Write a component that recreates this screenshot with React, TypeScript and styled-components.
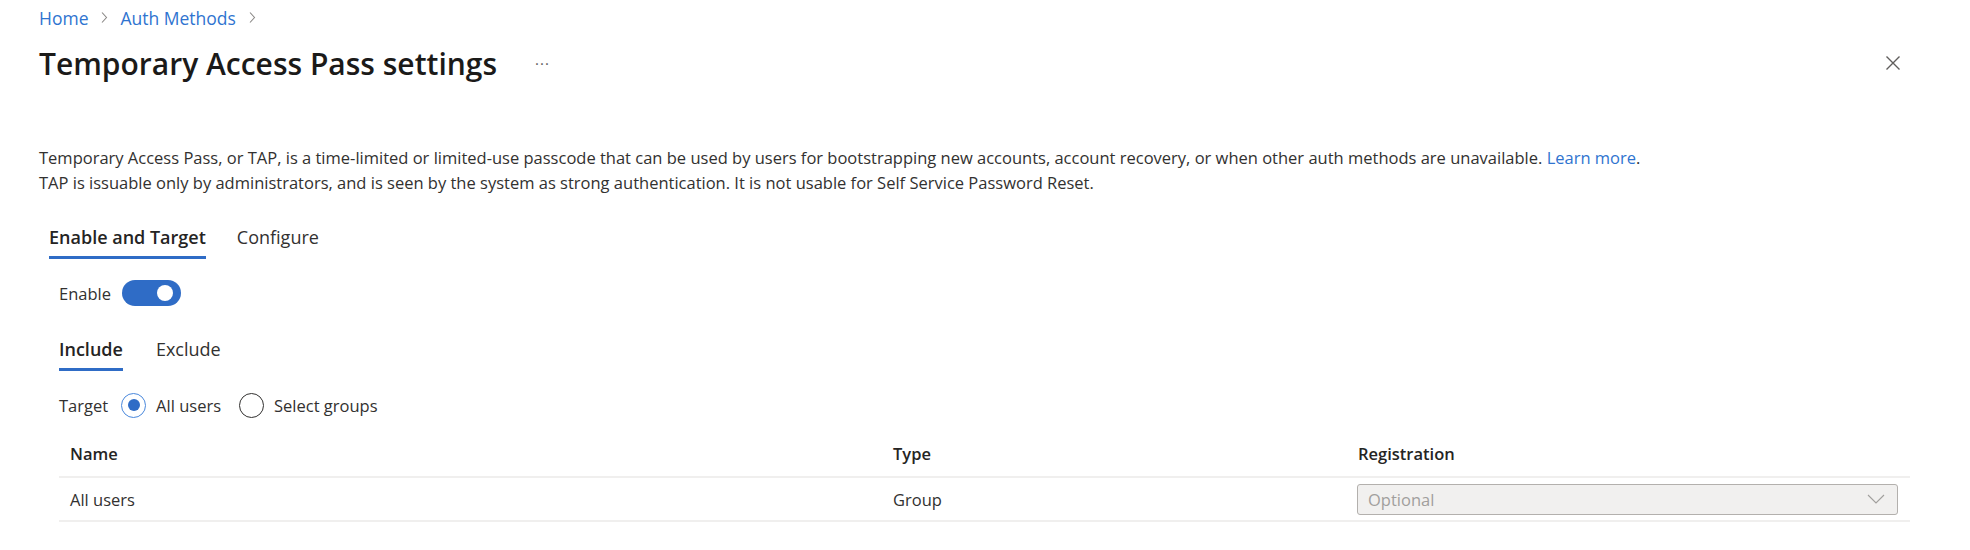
import React from "react";
import styled, { createGlobalStyle } from "styled-components";

const GlobalStyle = createGlobalStyle`
  body {
    margin: 0;
    background: #ffffff;
    font-family: "Open Sans", "Noto Sans", Arial, sans-serif;
    color: #323130;
  }
`;

const Page = styled.div`
  padding: 0 39px;
`;

const Breadcrumb = styled.nav`
  display: flex;
  align-items: center;
  height: 35px;
  font-size: 17.5px;
`;

const Crumb = styled.a`
  color: #2f74d0;
  text-decoration: none;
`;

const CrumbSep = styled.span`
  display: inline-flex;
  margin: 0 12px;
`;

const Header = styled.div`
  display: flex;
  align-items: center;
  height: 56px;
`;

const Title = styled.h1`
  margin: 0;
  font-size: 30px;
  font-weight: 600;
  color: #1b1a19;
`;

const More = styled.span`
  margin-left: 38px;
  font-size: 15px;
  color: #605e5c;
  letter-spacing: 1px;
`;

const CloseButton = styled.button`
  margin-left: auto;
  margin-right: 26px;
  border: none;
  background: none;
  padding: 4px;
  display: flex;
  cursor: pointer;
`;

const Description = styled.div`
  margin-top: 54px;
  font-size: 16.5px;
  line-height: 25px;
  color: #323130;
`;

const Link = styled.a`
  color: #2f74d0;
  text-decoration: none;
`;

const TabList = styled.div<{ $gap: number }>`
  display: flex;
  gap: ${(p) => p.$gap}px;
`;

const Tab = styled.div<{ $active?: boolean }>`
  font-size: 18px;
  line-height: 24px;
  font-weight: ${(p) => (p.$active ? 600 : 400)};
  color: ${(p) => (p.$active ? "#252423" : "#323130")};
  padding-bottom: 7px;
  border-bottom: 3px solid ${(p) => (p.$active ? "#2f6cc6" : "transparent")};
`;

const MainTabs = styled(TabList)`
  margin-top: 30px;
  padding-left: 10px;
`;

const Panel = styled.div`
  padding-left: 20px;
`;

const EnableRow = styled.div`
  display: flex;
  align-items: center;
  gap: 11px;
  margin-top: 21px;
  font-size: 16.5px;
`;

const Toggle = styled.span`
  position: relative;
  width: 59px;
  height: 26px;
  border-radius: 13px;
  background: #2f6cc6;
  display: inline-block;
`;

const Knob = styled.span`
  position: absolute;
  top: 5px;
  right: 8px;
  width: 16px;
  height: 16px;
  border-radius: 50%;
  background: #ffffff;
`;

const SubTabs = styled(TabList)`
  margin-top: 31px;
`;

const TargetRow = styled.div`
  display: flex;
  align-items: center;
  margin-top: 20px;
  font-size: 16.5px;
  height: 28px;
`;

const RadioOption = styled.label<{ $first?: boolean }>`
  display: flex;
  align-items: center;
  gap: 10px;
  margin-left: ${(p) => (p.$first ? 13 : 18)}px;
`;

const RadioCircle = styled.span<{ $checked?: boolean }>`
  box-sizing: border-box;
  width: 25px;
  height: 25px;
  border-radius: 50%;
  border: 1.5px solid ${(p) => (p.$checked ? "#4a88dc" : "#323130")};
  display: flex;
  align-items: center;
  justify-content: center;
  &::after {
    content: "";
    width: 12px;
    height: 12px;
    border-radius: 50%;
    background: ${(p) => (p.$checked ? "#2f6cc6" : "transparent")};
  }
`;

const Table = styled.div`
  margin-top: 12px;
  margin-right: 21px;
`;

const Row = styled.div<{ $header?: boolean }>`
  display: grid;
  grid-template-columns: 823px 465px 1fr;
  align-items: center;
  height: ${(p) => (p.$header ? 45 : 42)}px;
  border-bottom: 2px solid #f0efee;
  font-size: 16.5px;
  font-weight: ${(p) => (p.$header ? 600 : 400)};
  color: ${(p) => (p.$header ? "#252423" : "#323130")};
`;

const Cell = styled.div`
  padding-left: 11px;
`;

const Select = styled.div`
  display: flex;
  align-items: center;
  justify-content: space-between;
  width: 541px;
  height: 31px;
  box-sizing: border-box;
  margin-left: -1px;
  padding: 0 12px 0 10px;
  background: #f1f0ef;
  border: 1px solid #b3b0ad;
  border-radius: 3px;
  color: #a19f9d;
`;

const ChevronRight = () => (
  <svg width="8" height="13" viewBox="0 0 8 13">
    <path d="M2 1.5 L6.5 6.5 L2 11.5" fill="none" stroke="#8a8886" strokeWidth="1.1" />
  </svg>
);

const CloseIcon = () => (
  <svg width="16" height="16" viewBox="0 0 16 16">
    <path d="M1.5 1.5 L14.5 14.5 M14.5 1.5 L1.5 14.5" stroke="#605e5c" strokeWidth="1.4" />
  </svg>
);

const ChevronDown = () => (
  <svg width="18" height="10" viewBox="0 0 18 10">
    <path d="M1 1 L9 9 L17 1" fill="none" stroke="#a19f9d" strokeWidth="1.1" />
  </svg>
);

export default function App() {
  return (
    <Page>
      <GlobalStyle />
      <Breadcrumb>
        <Crumb href="#">Home</Crumb>
        <CrumbSep>
          <ChevronRight />
        </CrumbSep>
        <Crumb href="#">Auth Methods</Crumb>
        <CrumbSep>
          <ChevronRight />
        </CrumbSep>
      </Breadcrumb>
      <Header>
        <Title>Temporary Access Pass settings</Title>
        <More>···</More>
        <CloseButton aria-label="Close">
          <CloseIcon />
        </CloseButton>
      </Header>
      <Description>
        Temporary Access Pass, or TAP, is a time-limited or limited-use passcode that can be used by users for
        bootstrapping new accounts, account recovery, or when other auth methods are unavailable.{" "}
        <Link href="#">Learn more</Link>.
        <br />
        TAP is issuable only by administrators, and is seen by the system as strong authentication. It is not usable
        for Self Service Password Reset.
      </Description>
      <MainTabs $gap={31}>
        <Tab $active>Enable and Target</Tab>
        <Tab>Configure</Tab>
      </MainTabs>
      <Panel>
        <EnableRow>
          Enable
          <Toggle>
            <Knob />
          </Toggle>
        </EnableRow>
        <SubTabs $gap={33}>
          <Tab $active>Include</Tab>
          <Tab>Exclude</Tab>
        </SubTabs>
        <TargetRow>
          Target
          <RadioOption $first>
            <RadioCircle $checked />
            All users
          </RadioOption>
          <RadioOption>
            <RadioCircle />
            Select groups
          </RadioOption>
        </TargetRow>
        <Table>
          <Row $header>
            <Cell>Name</Cell>
            <Cell>Type</Cell>
            <Cell>Registration</Cell>
          </Row>
          <Row>
            <Cell>All users</Cell>
            <Cell>Group</Cell>
            <Cell>
              <Select>
                Optional
                <ChevronDown />
              </Select>
            </Cell>
          </Row>
        </Table>
      </Panel>
    </Page>
  );
}
